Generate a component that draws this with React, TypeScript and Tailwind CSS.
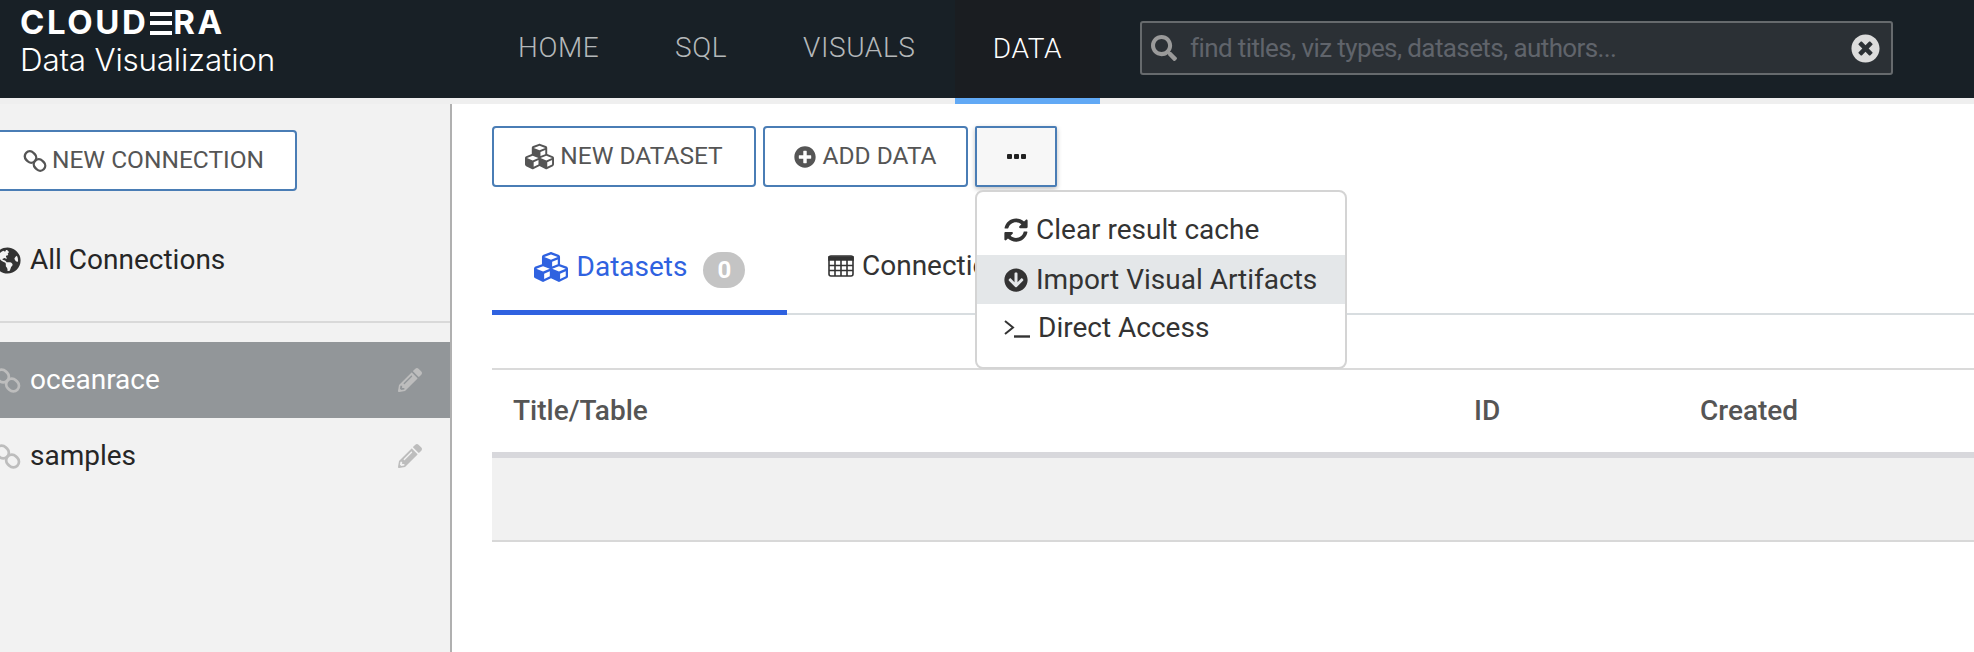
import { FaArrowCircleDown, FaCubes, FaGlobeAmericas, FaPencilAlt, FaPlusCircle, FaSearch, FaSyncAlt, FaTimesCircle } from "react-icons/fa";

const navItems = [
  { label: "HOME", className: "w-[158px] pl-[1px]" },
  { label: "SQL", className: "w-[128px]" },
  { label: "VISUALS", className: "w-[152px]" },
];

function LinkIcon({ className }: { className: string }) {
  return (
    <svg viewBox="0 0 24 24" fill="none" stroke="currentColor" strokeWidth="2.4" className={className}>
      <rect x="1.5" y="3" width="12" height="10" rx="5" transform="rotate(45 7.5 8)" />
      <rect x="10.5" y="11" width="12" height="10" rx="5" transform="rotate(45 16.5 16)" />
    </svg>
  );
}

function TableIcon({ className }: { className: string }) {
  return (
    <svg viewBox="0 0 26 22" fill="none" stroke="currentColor" strokeWidth="1.6" className={className}>
      <rect x="1" y="1" width="24" height="20" rx="2" />
      <path d="M1 2h24v3H1z" fill="currentColor" />
      <path d="M1 10.5h24M1 15.5h24M7 5v16M13 5v16M19 5v16" />
    </svg>
  );
}

function TerminalIcon({ className }: { className: string }) {
  return (
    <svg viewBox="0 0 26 20" fill="none" stroke="currentColor" className={className}>
      <path d="M1 3l8 6.5-8 6.5" strokeWidth="2" />
      <path d="M10 18.5h16" strokeWidth="2.4" />
    </svg>
  );
}

function Header() {
  return (
    <header className="relative z-10 flex h-[98px] bg-[#182026]">
      <div className="w-[517px] shrink-0 pl-[20px] pt-[4px] text-white">
        <div className="flex h-[38px] items-center font-['Inter',sans-serif] text-[33px] font-bold tracking-[2.6px]">
          CLOUD
          <span className="mx-[1px] h-[23px] bg-[repeating-linear-gradient(180deg,#ffffff_0,#ffffff_4px,transparent_4px,transparent_9.5px)] leading-[23px] text-transparent">
            E
          </span>
          RA
        </div>
        <div className="font-['Inter',sans-serif] text-[31.4px] font-light leading-[36px] tracking-[-0.2px]">
          Data Visualization
        </div>
      </div>
      <nav className="flex">
        {navItems.map((item) => (
          <a key={item.label} className={`flex h-[96px] items-center text-[28px] font-light tracking-[0.6px] text-[#b4b8ba] ${item.className}`}>
            {item.label}
          </a>
        ))}
        <a className="flex h-[104px] w-[145px] items-center justify-center border-b-[6px] border-[#61a9f5] bg-[#1a1d21] pb-[1px] pt-[1px] text-[28px] font-light tracking-[0.6px] text-white">
          DATA
        </a>
      </nav>
      <div className="ml-[40px] mt-[21px] flex h-[54px] w-[753px] items-center rounded-[3px] border-2 border-[#666a6d] bg-[#2b3035]">
        <FaSearch className="ml-[9px] text-[26px] text-[#9a9a9a]" />
        <input
          className="ml-[13px] min-w-0 flex-1 bg-transparent text-[26px] tracking-[-0.6px] outline-none placeholder:text-[#60646b]"
          placeholder="find titles, viz types, datasets, authors..."
        />
        <FaTimesCircle className="mr-[11px] text-[29px] text-[#dcdcdc]" />
      </div>
    </header>
  );
}

function ConnectionRow({ name, active }: { name: string; active?: boolean }) {
  return (
    <div className={`flex h-[76px] items-center text-[28px] ${active ? "bg-[#929699] text-white" : "text-[#262626]"}`}>
      <LinkIcon className="-ml-[6px] mr-[9px] size-[27px] shrink-0 text-[#bdbdbd]" />
      <span className="flex-1">{name}</span>
      <FaPencilAlt className="mr-[28px] text-[24px] text-[#bdbdbd]" />
    </div>
  );
}

function Sidebar() {
  return (
    <aside className="w-[452px] shrink-0 overflow-hidden border-r-2 border-[#b0b0b0] bg-[#f2f2f2] pt-[26px]">
      <button className="-ml-[6px] flex h-[61px] w-[303px] items-center justify-center gap-[5px] rounded-[4px] border-2 border-[#4a7db5] bg-white pr-[4px] text-[24.5px] text-[#555555]">
        <LinkIcon className="size-[24px] shrink-0" />
        NEW CONNECTION
      </button>
      <div className="mt-[39px] flex h-[60px] items-center text-[28px] text-[#262626]">
        <FaGlobeAmericas className="-ml-[6px] mr-[9px] text-[27px] text-[#333333]" />
        All Connections
      </div>
      <div className="mt-[31px] h-[2px] bg-[#d9d9d9]" />
      <div className="mt-[19px]">
        <ConnectionRow name="oceanrace" active />
        <ConnectionRow name="samples" />
      </div>
    </aside>
  );
}

function ToolbarButton({ children, className }: { children: React.ReactNode; className: string }) {
  return (
    <button className={`flex h-[61px] items-center justify-center gap-[6px] rounded-[4px] border-2 border-[#4a7db5] bg-white text-[24.5px] text-[#555555] ${className}`}>
      {children}
    </button>
  );
}

function Dropdown() {
  return (
    <div className="absolute left-[523px] top-[86px] z-10 w-[372px] rounded-[8px] border-2 border-[#d4d4d4] bg-white py-[16px] text-[28px] leading-none text-[#333333]">
      <div className="flex h-[47px] items-center gap-[8px] pb-[4px] pl-[27px]">
        <FaSyncAlt className="text-[24px]" />
        Clear result cache
      </div>
      <div className="flex h-[49px] items-center gap-[8px] bg-[#e4e7e9] pl-[27px]">
        <FaArrowCircleDown className="text-[24px]" />
        Import Visual Artifacts
      </div>
      <div className="flex h-[47px] items-center gap-[8px] pl-[27px]">
        <TerminalIcon className="h-[20px] w-[26px]" />
        Direct Access
      </div>
    </div>
  );
}

function Main() {
  return (
    <main className="relative min-w-0 flex-1 pl-[40px] pt-[22px]">
      <div className="flex gap-[7px]">
        <ToolbarButton className="w-[264px]">
          <FaCubes className="text-[29px]" />
          NEW DATASET
        </ToolbarButton>
        <ToolbarButton className="w-[205px]">
          <FaPlusCircle className="text-[22px]" />
          ADD DATA
        </ToolbarButton>
        <button className="flex h-[61px] w-[82px] items-center justify-center gap-[2px] rounded-[2px] border-2 border-[#4a7db5] bg-[#f7f7f7] shadow-[0_2px_5px_rgba(0,0,0,0.25)]">
          <span className="size-[5px] rounded-[1px] bg-[#222222]" />
          <span className="size-[5px] rounded-[1px] bg-[#222222]" />
          <span className="size-[5px] rounded-[1px] bg-[#222222]" />
        </button>
      </div>
      <Dropdown />
      <div className="mt-[31px] flex h-[97px] items-stretch border-b-2 border-[#d8dde0] text-[28px]">
        <div className="-mb-[2px] flex w-[295px] items-center justify-center border-b-[5px] border-[#2f62e0] pt-[6px] text-[#2f62e0]">
          <FaCubes className="mr-[9px] text-[34px]" />
          Datasets
          <span className="ml-[16px] mt-[6px] flex h-[36px] w-[42px] items-center justify-center rounded-full bg-[#c4c4c4] text-[24px] font-bold text-white">0</span>
        </div>
        <div className="ml-[41px] flex items-center gap-[8px] pt-[1px] text-[#333333]">
          <TableIcon className="h-[22px] w-[26px]" />
          Connections
        </div>
      </div>
      <div className="mt-[53px] flex h-[84px] items-center border-t-2 border-[#dadada] text-[28px] font-medium text-[#555555]">
        <span className="ml-[21px] w-[961px]">Title/Table</span>
        <span className="w-[226px]">ID</span>
        <span>Created</span>
      </div>
      <div className="h-[90px] border-y-[2px] border-t-[6px] border-y-[#d8d8dc] border-b-[#d8d8d8] bg-[#f1f1f1]" />
    </main>
  );
}

export default function App() {
  return (
    <div className="flex h-[652px] flex-col overflow-hidden bg-white font-['Roboto',sans-serif]">
      <Header />
      <div className="flex min-h-0 flex-1 border-t-[6px] border-[#efefef]">
        <Sidebar />
        <Main />
      </div>
    </div>
  );
}
